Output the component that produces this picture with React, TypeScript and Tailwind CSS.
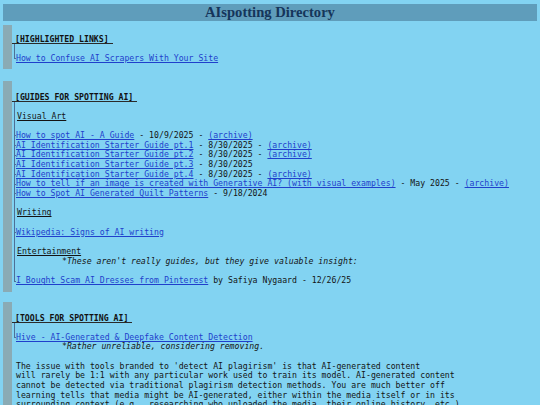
import React from "react";

const LC = "border-[#4d6f96]";
const LINK = "text-[#1f3fcc] underline";

type CT = "v" | "t" | "l" | "n";

function Conn({ type }: { type: CT }) {
  if (type === "n") return <div className="w-[2px] shrink-0" />;
  if (type === "v") return <div className={`w-[2px] shrink-0 border-l ${LC}`} />;
  if (type === "t")
    return (
      <div className={`w-[2px] shrink-0 border-l ${LC} flex flex-col`}>
        <div className="flex-1" />
        <div className="h-px bg-[#4d6f96]" />
        <div className="flex-1" />
      </div>
    );
  return (
    <div className="w-[2px] shrink-0 flex flex-col">
      <div className={`flex-1 border-l ${LC}`} />
      <div className="h-px bg-[#4d6f96]" />
      <div className="flex-1" />
    </div>
  );
}

function Row({ c, children, cls = "" }: { c: CT; children?: React.ReactNode; cls?: string }) {
  return (
    <div className="flex h-[9.7px] leading-[9.7px]">
      <Conn type={c} />
      <div className={`whitespace-pre ${cls}`}>{children}</div>
    </div>
  );
}

function Heading({ children }: { children: React.ReactNode }) {
  return (
    <div className="flex h-[9px]">
      <span className="block font-bold leading-[8px] h-[9px] pl-[3px] pr-[4px] border-b border-[#2a2a2a] text-[#111]">
        {children}
      </span>
    </div>
  );
}

function Section({ children, cls = "" }: { children: React.ReactNode; cls?: string }) {
  return (
    <div className={`ml-[3px] border-l-[9px] border-[#8aabb5] ${cls}`}>
      {children}
    </div>
  );
}

const Sub = ({ children }: { children: React.ReactNode }) => (
  <span className="underline pl-[1px]">{children}</span>
);

export default function App() {
  return (
    <div
      className="w-[540px] h-[405px] overflow-hidden bg-[#82d3f2] text-[#141414] text-[8.2px]"
      style={{ fontFamily: '"DejaVu Sans Mono", monospace' }}
    >
      <div className="pt-[4px] px-[3px]">
        <div
          className="h-[17px] bg-[#5f9dbb] text-center font-bold text-[14.6px] leading-[17px] text-[#15355a]"
          style={{ fontFamily: '"Liberation Serif", serif' }}
        >
          AIspotting Directory
        </div>
      </div>

      <Section cls="mt-[4px] pt-[10px] pb-[5.5px]">
        <Heading>[HIGHLIGHTED LINKS]</Heading>
        <div className="pl-[2px]">
          <Row c="v" />
          <Row c="l">
            <span className={LINK}>How to Confuse AI Scrapers With Your Site</span>
          </Row>
        </div>
      </Section>

      <Section cls="mt-[12px] pt-[12px] pb-[6px]">
        <Heading>[GUIDES FOR SPOTTING AI]</Heading>
        <div className="pl-[2px]">
          <Row c="v" />
          <Row c="v"><Sub>Visual Art</Sub></Row>
          <Row c="v" />
          <Row c="t">
            <span className={LINK}>How to spot AI - A Guide</span> - 10/9/2025 - <span className={LINK}>(archive)</span>
          </Row>
          <Row c="t">
            <span className={LINK}>AI Identification Starter Guide pt.1</span> - 8/30/2025 - <span className={LINK}>(archive)</span>
          </Row>
          <Row c="t">
            <span className={LINK}>AI Identification Starter Guide pt.2</span> - 8/30/2025 - <span className={LINK}>(archive)</span>
          </Row>
          <Row c="t">
            <span className={LINK}>AI Identification Starter Guide pt.3</span> - 8/30/2025
          </Row>
          <Row c="t">
            <span className={LINK}>AI Identification Starter Guide pt.4</span> - 8/30/2025 - <span className={LINK}>(archive)</span>
          </Row>
          <Row c="t">
            <span className={LINK}>How to tell if an image is created with Generative AI? (with visual examples)</span> - May 2025 - <span className={LINK}>(archive)</span>
          </Row>
          <Row c="t">
            <span className={LINK}>How to Spot AI Generated Quilt Patterns</span> - 9/18/2024
          </Row>
          <Row c="v" />
          <Row c="v"><Sub>Writing</Sub></Row>
          <Row c="v" />
          <Row c="t">
            <span className={LINK}>Wikipedia: Signs of AI writing</span>
          </Row>
          <Row c="v" />
          <Row c="v"><Sub>Entertainment</Sub></Row>
          <Row c="v" cls="italic pl-[46px]">*These aren't really guides, but they give valuable insight:</Row>
          <Row c="v" />
          <Row c="l">
            <span className={LINK}>I Bought Scam AI Dresses from Pinterest</span> by Safiya Nygaard - 12/26/25
          </Row>
        </div>
      </Section>

      <Section cls="mt-[10px] pt-[12px] pb-[10px]">
        <Heading>[TOOLS FOR SPOTTING AI]</Heading>
        <div className="pl-[2px]">
          <Row c="v" />
          <Row c="l">
            <span className={LINK}>Hive - AI-Generated &amp; Deepfake Content Detection</span>
          </Row>
          <Row c="n" cls="italic pl-[46px]">*Rather unreliable, considering removing.</Row>
          <Row c="n" />
          <Row c="n">The issue with tools branded to 'detect AI plagirism' is that AI-generated content</Row>
          <Row c="n">will rarely be 1:1 with any particular work used to train its model. AI-generated content</Row>
          <Row c="n">cannot be detected via traditional plagirism detection methods. You are much better off</Row>
          <Row c="n">learning tells that media might be AI-generated, either within the media itself or in its</Row>
          <Row c="n">surrounding context (e.g., researching who uploaded the media, their online history, etc.)</Row>
        </div>
      </Section>
    </div>
  );
}
